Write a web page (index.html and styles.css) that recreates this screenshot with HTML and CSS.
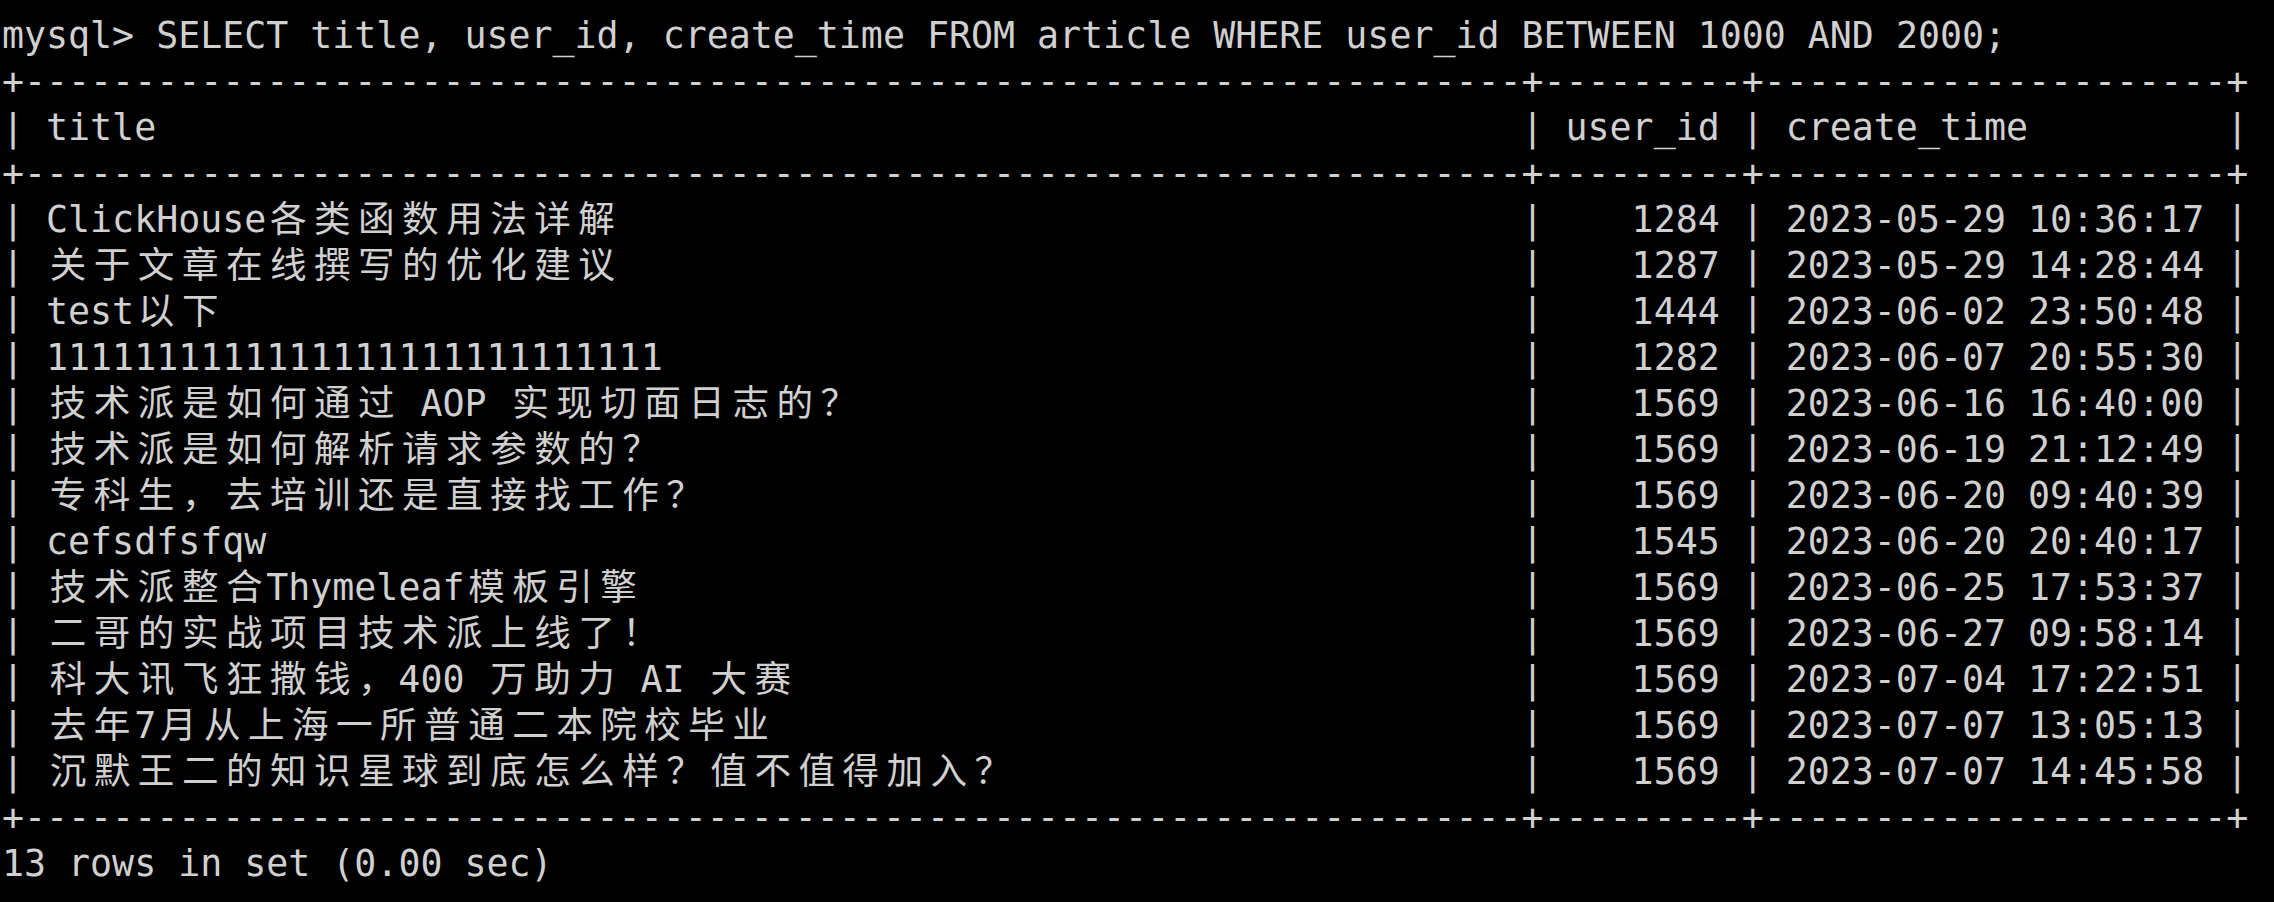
FILE: index.html
```html
<!DOCTYPE html>
<html lang="zh-CN">
<head>
<meta charset="utf-8">
<title>mysql</title>
<link rel="stylesheet" href="styles.css">
</head>
<body>
<div class="term">
<div class="ln">mysql&gt; SELECT title, user_id, create_time FROM article WHERE user_id BETWEEN 1000 AND 2000;</div>
<div class="ln">+--------------------------------------------------------------------+---------+---------------------+</div>
<div class="ln"><span class="t">| title</span><span>| user_id | create_time         |</span></div>
<div class="ln">+--------------------------------------------------------------------+---------+---------------------+</div>
<div class="ln"><span class="t">| ClickHouse<span class="w">各类函数用法详解</span></span><span>|    1284 | 2023-05-29 10:36:17 |</span></div>
<div class="ln"><span class="t">| <span class="w">关于文章在线撰写的优化建议</span></span><span>|    1287 | 2023-05-29 14:28:44 |</span></div>
<div class="ln"><span class="t">| test<span class="w">以下</span></span><span>|    1444 | 2023-06-02 23:50:48 |</span></div>
<div class="ln"><span class="t">| 1111111111111111111111111111</span><span>|    1282 | 2023-06-07 20:55:30 |</span></div>
<div class="ln"><span class="t">| <span class="w">技术派是如何通过</span> AOP <span class="w">实现切面日志的？</span></span><span>|    1569 | 2023-06-16 16:40:00 |</span></div>
<div class="ln"><span class="t">| <span class="w">技术派是如何解析请求参数的？</span></span><span>|    1569 | 2023-06-19 21:12:49 |</span></div>
<div class="ln"><span class="t">| <span class="w">专科生，去培训还是直接找工作？</span></span><span>|    1569 | 2023-06-20 09:40:39 |</span></div>
<div class="ln"><span class="t">| cefsdfsfqw</span><span>|    1545 | 2023-06-20 20:40:17 |</span></div>
<div class="ln"><span class="t">| <span class="w">技术派整合</span>Thymeleaf<span class="w">模板引擎</span></span><span>|    1569 | 2023-06-25 17:53:37 |</span></div>
<div class="ln"><span class="t">| <span class="w">二哥的实战项目技术派上线了！</span></span><span>|    1569 | 2023-06-27 09:58:14 |</span></div>
<div class="ln"><span class="t">| <span class="w">科大讯飞狂撒钱，</span>400 <span class="w">万助力</span> AI <span class="w">大赛</span></span><span>|    1569 | 2023-07-04 17:22:51 |</span></div>
<div class="ln"><span class="t">| <span class="w">去年</span>7<span class="w">月从上海一所普通二本院校毕业</span></span><span>|    1569 | 2023-07-07 13:05:13 |</span></div>
<div class="ln"><span class="t">| <span class="w">沉默王二的知识星球到底怎么样？值不值得加入？</span></span><span>|    1569 | 2023-07-07 14:45:58 |</span></div>
<div class="ln">+--------------------------------------------------------------------+---------+---------------------+</div>
<div class="ln">13 rows in set (0.00 sec)</div>
</div>
</body>
</html>
```

FILE: styles.css
```css
html, body {
  margin: 0;
  padding: 0;
  background: #000;
}

.term {
  padding: 13px 0 0 2px;
  font-family: "DejaVu Sans Mono", "Noto Sans CJK SC", monospace;
  font-size: 36.6px;
  line-height: 46px;
  color: #d0d0d0;
}

.ln {
  display: flex;
  height: 46px;
  white-space: pre;
}

.t {
  flex: none;
  width: 69ch;
}

.w {
  font-family: "Noto Sans CJK SC", sans-serif;
  line-height: 30px;
  letter-spacing: 7.46px;
  padding-left: 3.73px;
  margin-right: -3.73px;
}
```
